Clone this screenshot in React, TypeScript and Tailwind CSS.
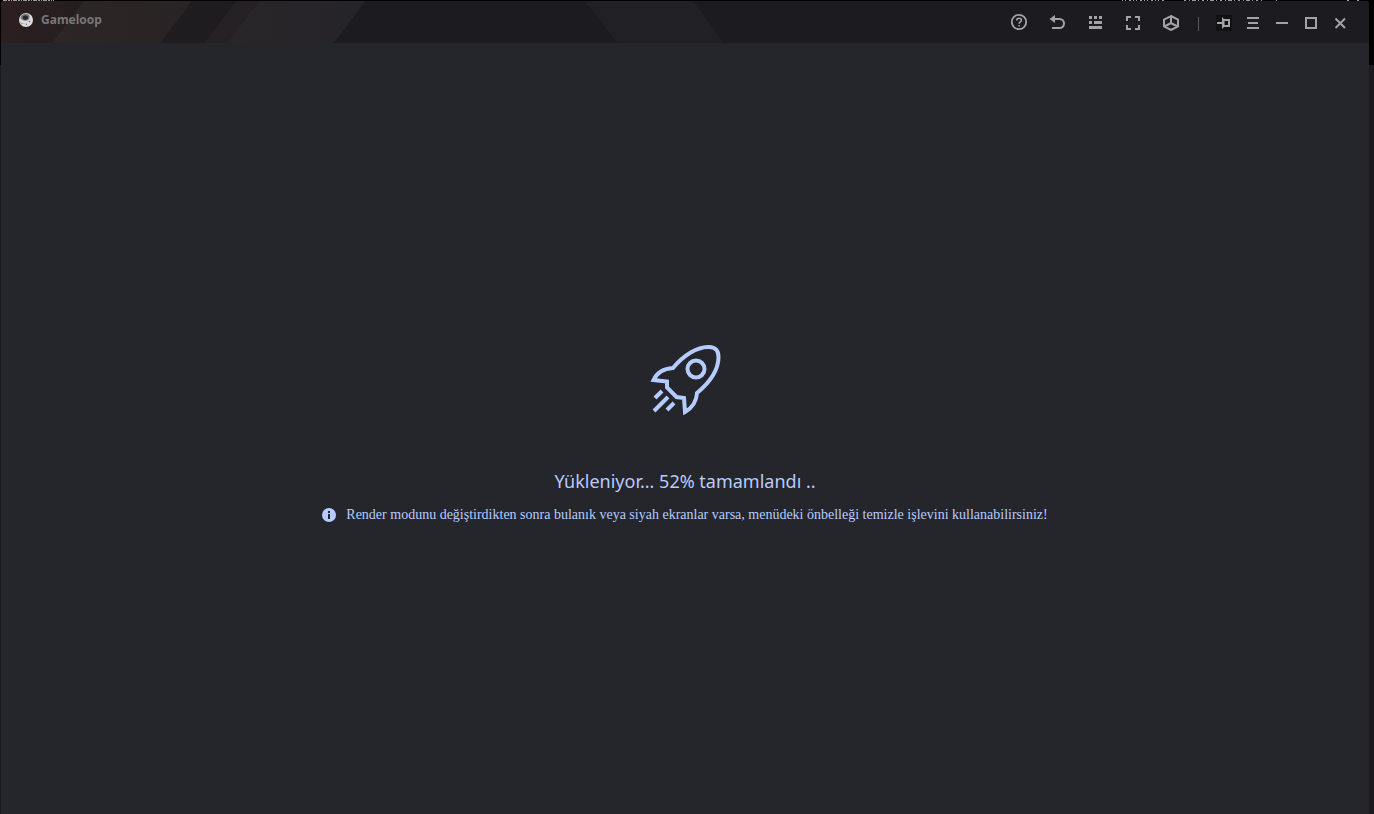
import type { ReactNode } from "react";

function IconButton({ label, children }: { label: string; children: ReactNode }) {
  return (
    <button type="button" aria-label={label} className="flex h-[18px] w-[18px] items-center justify-center text-[#a3a3a5]">
      {children}
    </button>
  );
}

function Icon({ children }: { children: ReactNode }) {
  return (
    <svg viewBox="0 0 18 18" className="h-[18px] w-[18px] shrink-0" fill="none" stroke="currentColor" strokeWidth="2" aria-hidden="true">
      {children}
    </svg>
  );
}

function HeaderArt() {
  return (
    <svg className="absolute left-0 top-0 h-[42px] w-[760px]" viewBox="0 0 760 42" aria-hidden="true">
      <defs>
        <linearGradient id="base" x1="0" x2="1">
          <stop offset="0" stopColor="#2c1f20" />
          <stop offset="0.3" stopColor="#211d1e" />
          <stop offset="0.6" stopColor="#1e1c1f" />
          <stop offset="1" stopColor="#1c1b1f" />
        </linearGradient>
        <linearGradient id="warm" x1="0" x2="1">
          <stop offset="0" stopColor="#2d2626" />
          <stop offset="1" stopColor="#2a2325" />
        </linearGradient>
        <linearGradient id="cool" x1="0" x2="1">
          <stop offset="0" stopColor="#292628" />
          <stop offset="1" stopColor="#252429" />
        </linearGradient>
      </defs>
      <path d="M0 0H364V42H0Z" fill="url(#base)" />
      <path d="M83 0H191L159 42H51Z" fill="url(#warm)" />
      <path d="M235 0H258L226 42H203Z" fill="#252124" />
      <path d="M258 0H364L333 42H226Z" fill="url(#cool)" />
      <path d="M584 0H692L723 42H616Z" fill="#212025" />
    </svg>
  );
}

function Logo() {
  return (
    <svg viewBox="0 0 14 14" className="h-[14px] w-[14px]" aria-hidden="true">
      <circle cx="7" cy="7" r="7" fill="#dcdcde" />
      <path d="M1.500 4C2.500 1.500 5 .8 7 .8c3 .1 4.200 2 3.400 4.200-.6 2-2.500 3.100-4.700 2.800C3.400 7.500 1.200 6 1.500 4Z" fill="#78777a" />
      <path d="M4 3.500C5 2 8.500 2 9 4C9.400 6 7.500 7.200 5.500 6.800C4 6.500 3.300 4.800 4 3.500Z" fill="#29282b" />
      <path d="M.8 8.200C2 10 4 10.500 6 10.100c-.8.900-2 1.200-3.300 1.100C1.600 10.700 1 9.600.8 8.200Z" fill="#a09fa2" />
      <circle cx="10.500" cy="8.500" r=".8" fill="#5a595c" />
      <circle cx="7.500" cy="11.200" r=".7" fill="#6b6a6d" />
    </svg>
  );
}

function Rocket() {
  return (
    <svg viewBox="0 0 90 90" className="h-[90px] w-[90px]" fill="none" stroke="#b6ccff" strokeWidth="4" aria-hidden="true">
      <path d="M33 33C43 21 57 11.500 69 12C75.500 12.300 78.500 15 78.500 22C78.500 35 69 48 57 58C56.500 66 52 73 45 77L44 63L36.500 62L27 52.500L27 46.500L13.500 45C17 37.500 24 33.500 33 33Z" />
      <circle cx="56" cy="34" r="8.500" />
      <path d="M22 56L15 63M28 62L14 76M34 68L27 75" />
    </svg>
  );
}

export default function App() {
  return (
    <div className="flex min-h-screen flex-col bg-black font-['Noto_Sans','Open_Sans',sans-serif]">
      <svg className="h-px w-full" aria-hidden="true" stroke="#9a9a9a" strokeWidth="1">
        <path d="M3 .5H54" strokeDasharray="4 1 2 1 1 1" />
        <path d="M1122 .5H1165" strokeDasharray="1 2 1 3 2 2" />
        <path d="M1184 .5H1264" strokeDasharray="2 3 1 2 4 2 1 3" />
        <path d="M1276 .5h1M1347 .5h2M1357 .5h2" />
      </svg>
      <div className="flex flex-1">
        <div className="flex w-px flex-col bg-[#1b1a1d]">
          <div className="h-16 bg-black" />
        </div>
        <div className="flex flex-1 flex-col overflow-hidden rounded-t-[3px] bg-[#25262b]">
          <header className="relative flex h-[42px] items-center justify-between bg-[#1c1b1f] pl-[18px] pr-5">
            <HeaderArt />
            <div className="relative flex items-center gap-2 pb-1">
              <Logo />
              <h1 className="text-[12px] font-bold leading-4 text-[#77767b]">Gameloop</h1>
            </div>
            <div className="relative flex items-center">
              <nav aria-label="Araçlar" className="flex gap-5">
                <IconButton label="Yardım">
                  <Icon>
                    <circle cx="9" cy="9" r="7.200" strokeWidth="1.800" />
                    <path d="M6.700 7.500C6.700 4.500 11.400 4.600 11.400 7.200C11.400 8.800 9.100 8.900 9.100 10.800M9.100 11.900V13.400" strokeWidth="1.600" />
                  </Icon>
                </IconButton>
                <IconButton label="Geri">
                  <Icon>
                    <path d="M5 6H11.500A4.500 4.500 0 0 1 11.500 15H4" />
                    <path d="M1.500 6L7 2V10Z" fill="currentColor" stroke="none" />
                  </Icon>
                </IconButton>
                <IconButton label="Tuş atama">
                  <Icon>
                    <path d="M3 3h3v3H3zM8 3h3v3H8zM13 3h3v3h-3zM3 8h3v3H3zM8 8h8v3H8zM3 13h13v3H3z" fill="currentColor" stroke="none" />
                  </Icon>
                </IconButton>
                <IconButton label="Tam ekran">
                  <Icon>
                    <path d="M3 8V4H7M11 4H15V8M15 12V16H11M7 16H3V12" />
                  </Icon>
                </IconButton>
                <IconButton label="Uygulama yükle">
                  <Icon>
                    <path d="M9 3L16 6.500V13.500L9 17L2 13.500V6.500ZM9 3V10M9 10L2.500 13.500M9 10L15.500 13.500" />
                  </Icon>
                </IconButton>
              </nav>
              <div className="ml-[18px] mr-4 mt-1 h-[14px] w-px bg-[#59585c]" />
              <div className="flex gap-[11px] pt-0.5">
                <IconButton label="Üstte tut">
                  <Icon>
                    <path d="M1 1H17V17H1Z" fill="#111113" stroke="none" />
                    <path d="M2 9H7" />
                    <path d="M7 3L9 5H15V13H9L7 15ZM9.500 7V11H13V7Z" fill="currentColor" fillRule="evenodd" stroke="none" />
                  </Icon>
                </IconButton>
                <IconButton label="Menü">
                  <Icon><path d="M3 4H15M4 9H14M3 14H15" /></Icon>
                </IconButton>
                <IconButton label="Simge durumuna küçült">
                  <Icon><path d="M3 9H15" /></Icon>
                </IconButton>
                <IconButton label="Ekranı kapla">
                  <Icon><path d="M4 4H14V14H4Z" /></Icon>
                </IconButton>
                <IconButton label="Kapat">
                  <Icon><path d="M4.500 4.500L14 14M14 4.500L4.500 14" /></Icon>
                </IconButton>
              </div>
            </div>
          </header>
          <main className="flex flex-1 flex-col items-center justify-center pt-0.5 text-[#b6ccff]">
            <Rocket />
            <p className="mt-10 text-[18px] leading-8">Yükleniyor... 52% tamamlandı ..</p>
            <div className="mt-2 flex items-center gap-[10px]">
              <svg viewBox="0 0 14 14" className="h-[14px] w-[14px]" aria-hidden="true">
                <circle cx="7" cy="7" r="7" fill="#b6ccff" />
                <path d="M6 3h2v2H6zM6 6h2v5H6z" fill="#25262b" />
              </svg>
              <p className="font-['Liberation_Serif',serif] text-[14px] leading-5">
                Render modunu değiştirdikten sonra bulanık veya siyah ekranlar varsa, menüdeki önbelleği temizle işlevini kullanabilirsiniz!
              </p>
            </div>
          </main>
        </div>
        <div className="flex w-[5px] flex-col bg-[#1b1a1d]">
          <div className="h-16 bg-black" />
        </div>
      </div>
    </div>
  );
}
